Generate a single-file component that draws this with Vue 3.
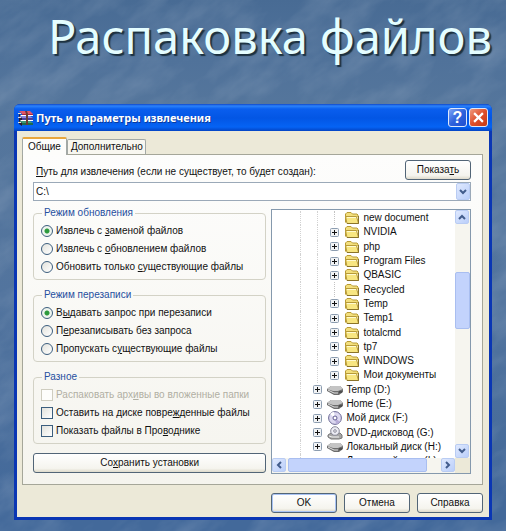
<script setup>
import { ref } from 'vue'

const path = ref('C:\\')
const update = ref(0)
const overwrite = ref(0)

// Each label is split as [before, underlined access key, after]
const updateModes = [
  ['Извлечь с ', 'з', 'аменой файлов'],
  ['Извлечь с ', 'о', 'бновлением файлов'],
  ['Обновить только ', 'с', 'уществующие файлы'],
]
const overwriteModes = [
  ['В', 'ы', 'давать запрос при перезаписи'],
  ['П', 'е', 'резаписывать без запроса'],
  ['Пропускать с', 'у', 'ществующие файлы'],
]
const misc = [
  { text: ['Распаковать арх', 'и', 'вы во вложенные папки'], disabled: true },
  { text: ['Оставить на диске повре', 'ж', 'денные файлы'], disabled: false },
  { text: ['Показать файлы в Про', 'в', 'однике'], disabled: false },
]
const nodes = [
  { name: 'new document', icon: 'folder', leaf: true },
  { name: 'NVIDIA', icon: 'folder' },
  { name: 'php', icon: 'folder' },
  { name: 'Program Files', icon: 'folder' },
  { name: 'QBASIC', icon: 'folder' },
  { name: 'Recycled', icon: 'folder', leaf: true },
  { name: 'Temp', icon: 'folder' },
  { name: 'Temp1', icon: 'folder' },
  { name: 'totalcmd', icon: 'folder' },
  { name: 'tp7', icon: 'folder' },
  { name: 'WINDOWS', icon: 'folder' },
  { name: 'Мои документы', icon: 'folder' },
  { name: 'Temp (D:)', icon: 'drive' },
  { name: 'Home (E:)', icon: 'drive' },
  { name: 'Мой диск (F:)', icon: 'disc' },
  { name: 'DVD-дисковод (G:)', icon: 'dvd' },
  { name: 'Локальный диск (H:)', icon: 'drive' },
]
</script>

<template>
  <div class="slide">
    <svg class="texture" aria-hidden="true">
      <filter id="stone" x="0" y="0" width="100%" height="100%">
        <feTurbulence type="fractalNoise" baseFrequency="0.02 0.045" numOctaves="4" seed="8" />
        <feColorMatrix values="0 0 0 0 0.66  0 0 0 0 0.72  0 0 0 0 0.8  1.4 0 0 0 -0.5" />
      </filter>
      <g transform="rotate(-35)">
        <rect x="-600" y="-300" width="1600" height="1400" filter="url(#stone)" />
      </g>
    </svg>
    <h1>Распаковка файлов</h1>

    <main class="window">
      <header class="titlebar">
        <svg class="app-icon" viewBox="0 0 16 16" aria-hidden="true">
          <path d="M1 4l3 2v10l-3-2z" fill="#2a1830" />
          <path d="M1 1h11l3 3H4z" fill="#e0566a" /><path d="M4 4h11v1H4z" fill="#a8283e" />
          <path d="M2 5h13v1H3z" fill="#fff" />
          <path d="M1 6h11l3 2H4z" fill="#8a86e0" /><path d="M4 8h11v2H4z" fill="#4b3f9c" />
          <path d="M2 10h13v1H3z" fill="#fff" />
          <path d="M1 11h11l3 2H4z" fill="#3f9a78" /><path d="M4 13h11v2H4z" fill="#1d6a4c" />
          <path d="M0 3h3v1H0zM0 7h3v1H0zM0 12h3v1H0z" fill="#e6dfd2" />
          <path d="M7 1h2l1 3v11H8V4z" fill="#6a3b34" />
        </svg>
        <h2>Путь и параметры извлечения</h2>
        <button class="caption help" aria-label="Справка">?</button>
        <button class="caption close" aria-label="Закрыть">
          <svg viewBox="0 0 10 10"><path d="M1 1l8 8M9 1l-8 8" stroke="#fff" stroke-width="2" /></svg>
        </button>
      </header>

      <div class="body">
        <nav class="tabs">
          <button class="tab active">Общие</button>
          <button class="tab">Дополнительно</button>
        </nav>

        <section class="panel">
          <div class="path-head">
            <label for="path"><u>П</u>уть для извлечения (если не существует, то будет создан):</label>
            <button class="btn browse">Показа<u>т</u>ь</button>
          </div>
          <div class="combo">
            <input id="path" v-model="path" type="text" />
            <button class="arrow" aria-label="Список путей">
              <svg viewBox="0 0 8 6"><path d="M1 1l3 3 3-3" /></svg>
            </button>
          </div>

          <div class="columns">
            <div class="options">
              <fieldset>
                <legend>Режим обновления</legend>
                <label v-for="(m, i) in updateModes" :key="i">
                  <input v-model="update" type="radio" name="update" :value="i" />
                  <span>{{ m[0] }}<u>{{ m[1] }}</u>{{ m[2] }}</span>
                </label>
              </fieldset>
              <fieldset>
                <legend>Режим перезаписи</legend>
                <label v-for="(m, i) in overwriteModes" :key="i">
                  <input v-model="overwrite" type="radio" name="overwrite" :value="i" />
                  <span>{{ m[0] }}<u>{{ m[1] }}</u>{{ m[2] }}</span>
                </label>
              </fieldset>
              <fieldset>
                <legend>Разное</legend>
                <label v-for="(m, i) in misc" :key="i" :class="{ disabled: m.disabled }">
                  <input type="checkbox" :disabled="m.disabled" />
                  <span>{{ m.text[0] }}<u>{{ m.text[1] }}</u>{{ m.text[2] }}</span>
                </label>
              </fieldset>
              <button class="btn save">Со<u>х</u>ранить установки</button>
            </div>

            <div class="tree">
              <ul>
                <li v-for="n in nodes" :key="n.name" :class="{ leaf: n.leaf }">
                  <span class="guide"></span>
                  <span v-if="n.icon === 'folder'" class="guide"></span>
                  <span class="branch">
                    <svg v-if="!n.leaf" viewBox="0 0 9 9" aria-hidden="true">
                      <rect x="0.5" y="0.5" width="8" height="8" rx="1" fill="#f1f3f5" stroke="#8c9db0" />
                      <path d="M2 4.5h5M4.5 2v5" stroke="#111" />
                    </svg>
                  </span>
                  <svg v-if="n.icon === 'folder'" class="icon" viewBox="0 0 16 14" aria-hidden="true">
                    <path d="M1.5 11.5V3L3 1.5h4L8.5 3H13l1 1v2" fill="#f3df7c" stroke="#b99b35" />
                    <path d="M1.5 5.5h11l2 7H3z" fill="#f8e681" stroke="#b79a39" />
                    <path d="M3 12.5h11.5V5" fill="none" stroke="#8b742a" />
                    <path d="M3 6.5h9" stroke="#fffbd0" />
                  </svg>
                  <svg v-else-if="n.icon === 'drive'" class="icon" viewBox="0 0 16 14" aria-hidden="true">
                    <path d="M0 6l4-3h9l3 3v3l-4 3H7L0 8z" fill="#6c6c6c" />
                    <path d="M0 6l4-3h9l3 3-5 2H6z" fill="#c4c4c4" />
                    <path d="M1 7l6 3h4" fill="none" stroke="#e4e4e4" /><path d="M12 9h3" stroke="#333" />
                  </svg>
                  <svg v-else-if="n.icon === 'disc'" class="icon" viewBox="0 0 16 14" aria-hidden="true">
                    <circle cx="8" cy="7" r="6.4" fill="#dcd8f0" stroke="#6b6894" />
                    <path d="M8 7L3 3a6 6 0 0 1 4-2z" fill="#fff" /><path d="M8 7l5 4a6 6 0 0 1-4 2z" fill="#b8add8" />
                    <circle cx="8" cy="7" r="2" fill="#fff" stroke="#5f5a90" />
                  </svg>
                  <svg v-else class="icon" viewBox="0 0 16 14" aria-hidden="true">
                    <path d="M1 9l3-2h9l2 2v3l-3 1H4l-3-2z" fill="#a6a6a6" stroke="#777" />
                    <circle cx="8" cy="5" r="4.3" fill="#ececf3" stroke="#8a8a9a" />
                    <circle cx="8" cy="5" r="1.3" fill="#fff" stroke="#8a8a9a" />
                    <path d="M2 10l3 1h7" fill="none" stroke="#f2f2f2" />
                  </svg>
                  <span>{{ n.name }}</span>
                </li>
                <li class="cut"><span class="guide"></span><span class="branch"></span><span class="icon"></span><span>Локальный диск (I:)</span></li>
              </ul>
              <div class="vbar">
                <button class="arrow" aria-label="Вверх"><svg viewBox="0 0 8 6"><path d="M1 5l3-3 3 3" /></svg></button>
                <div class="vtrack"><span class="vthumb"></span></div>
                <button class="arrow" aria-label="Вниз"><svg viewBox="0 0 8 6"><path d="M1 1l3 3 3-3" /></svg></button>
              </div>
              <div class="hbar">
                <button class="arrow" aria-label="Влево"><svg viewBox="0 0 6 8"><path d="M5 1L2 4l3 3" /></svg></button>
                <div class="htrack"><span class="hthumb"></span></div>
                <button class="arrow" aria-label="Вправо"><svg viewBox="0 0 6 8"><path d="M1 1l3 3-3 3" /></svg></button>
              </div>
              <span class="corner"></span>
            </div>
          </div>
        </section>

        <footer>
          <button class="btn default">OK</button>
          <button class="btn">Отмена</button>
          <button class="btn">Справка</button>
        </footer>
      </div>
    </main>
  </div>
</template>

<style>
body { margin: 0; background: #456b9b; }
</style>

<style scoped>
* { box-sizing: border-box; }
.slide {
  position: relative;
  min-height: 100vh;
  padding: 0 14px 10px;
  overflow: hidden;
  background: linear-gradient(#486b94 0, #50729a 60px, #55769c 110px, #52749e 300px, #43699a 500px);
  font: 10px/14px "Liberation Sans", Arial, sans-serif;
  color: #111;
}
.texture { position: absolute; inset: 0; width: 100%; height: 100%; opacity: 0.22; }
h1 {
  position: relative;
  margin: 0;
  height: 104px;
  padding-top: 4px;
  font: 47px/64px "Noto Sans", "Open Sans", sans-serif;
  text-align: right;
  white-space: nowrap;
  color: #e4fdff;
  text-shadow: 2px 2px 1px #1c3140;
}
button, input { font: inherit; color: inherit; margin: 0; }
button { padding: 0; }
svg { display: block; }
.window {
  position: relative;
  border-radius: 6px 6px 0 0;
  background: #0a36b4;
  padding: 0 3px 3px;
}
.titlebar {
  display: flex;
  align-items: center;
  gap: 2px;
  height: 27px;
  margin: 0 -3px;
  padding: 0 4px;
  border-radius: 6px 6px 0 0;
  background: linear-gradient(#1048c8 0, #2c83fa 2px, #0a5eee 5px, #0356e4 14px, #0563f4 23px, #0344c4 27px);
}
.app-icon { width: 16px; height: 16px; }
h2 {
  flex: 1;
  margin: 0;
  font: bold 11px/14px "Noto Sans", "Open Sans", sans-serif;
  color: #fff;
  text-shadow: 1px 1px 0 #0b3a9c;
}
.caption {
  display: grid;
  place-items: center;
  width: 19px;
  height: 19px;
  border: 1px solid #dfe9fb;
  border-radius: 3px;
  color: #fff;
}
.help { background: linear-gradient(135deg, #7ea5f6, #2f62dc 50%, #1e4fd0); font: bold 16px/16px "Liberation Sans", sans-serif; }
.close { background: linear-gradient(135deg, #f09a7e, #de4f2b 50%, #c53a14); }
.close svg { width: 11px; height: 11px; }
.body { padding: 6px 6px 4px 5px; background: #ece9d8; }
.tabs { display: flex; align-items: flex-end; }
.tab {
  height: 15px;
  padding: 0 2px 0 3px;
  border: 1px solid #a3a9a6;
  border-bottom: 0;
  border-radius: 2px 2px 0 0;
  background: #f8f7f0;
}
.tab.active {
  height: 18px;
  margin-bottom: -1px;
  padding: 0 5px;
  position: relative;
  border-top: 2px solid #e8a63c;
  background: #fdfdfb;
}
.panel {
  padding: 5px 11px 10px 10px;
  border: 1px solid #a5a699;
  background: linear-gradient(#fdfdfc, #f5f4ee);
}
.path-head { display: flex; justify-content: space-between; }
.path-head label { padding-top: 5px; padding-left: 3px; white-space: nowrap; }
.btn {
  height: 20px;
  border: 1px solid #526577;
  border-radius: 3px;
  background: linear-gradient(#fff, #f5f4ee 80%, #dedacb);
}
.browse { width: 66px; }
.combo {
  display: flex;
  height: 19px;
  margin-top: 2px;
  border: 1px solid #9ba9b8;
  background: #fff;
}
.combo input { flex: 1; min-width: 0; padding: 0 2px; border: 0; background: none; outline: 0; }
.arrow {
  display: grid;
  place-items: center;
  flex: none;
  width: 14px;
  height: 14px;
  border: 1px solid #b9ccf3;
  border-radius: 2px;
  background: linear-gradient(135deg, #dfe9fe, #bacefa);
}
.combo .arrow { height: 17px; }
.arrow svg { width: 8px; height: 8px; }
.arrow path { fill: none; stroke: #425c8c; stroke-width: 2; }
.columns { display: flex; gap: 5px; margin-top: 5px; }
.options { flex: 235; display: flex; flex-direction: column; min-width: 0; padding-bottom: 1px; }
fieldset {
  display: flex;
  flex-direction: column;
  gap: 4px;
  min-width: 0;
  height: 74px;
  margin: 0 0 8px;
  padding: 4px 7px 0;
  border: 1px solid #d3d2c6;
  border-radius: 4px;
}
legend { margin-left: 1px; padding: 0 2px; color: #264f9f; }
fieldset label { display: flex; align-items: center; gap: 3px; white-space: nowrap; }
fieldset input {
  appearance: none;
  flex: none;
  width: 12px;
  height: 12px;
  border: 1px solid #3c5e7e;
  background: linear-gradient(135deg, #e2e2dc, #fff);
}
input[type="radio"] { border-radius: 50%; }
input[type="radio"]:checked { background: radial-gradient(#2d9a3d 0 2px, #eef4ee 3px); }
.disabled { color: #b1afa3; }
.disabled input { border-color: #cfcdc0; background: #fdfdfb; }
.save { width: 100%; margin-top: 1px; }
.tree {
  flex: 199;
  display: grid;
  grid-template: 1fr 15px / 1fr 15px;
  min-width: 0;
  margin-top: 3px;
  border: 1px solid #8599ad;
  background: #fff;
}
ul {
  display: flex;
  flex-direction: column;
  min-width: 0;
  min-height: 0;
  margin: 0;
  padding: 1px 0 0 28px;
  overflow: hidden;
  list-style: none;
}
li { display: flex; flex: 1; min-height: 0; align-items: center; white-space: nowrap; }
.guide { align-self: stretch; flex: none; width: 17px; border-left: 1px dotted #d2d2d2; }
.branch { flex: none; display: grid; align-items: center; align-self: stretch; width: 14px; margin-left: -4px; }
.leaf .branch { margin-left: 0; width: 10px; border-left: 1px dotted #c3c3c3; }
.branch svg { width: 9px; height: 9px; }
.icon { flex: none; width: 16px; height: 14px; margin-right: 3px; }
.cut { flex: none; height: 4px; align-items: flex-start; overflow: hidden; }
.vbar, .hbar { display: flex; background: #f6f5ef; }
.vbar { flex-direction: column; }
.vtrack { flex: 1; padding-top: 48px; }
.vthumb, .hthumb { display: block; border: 1px solid #a9bef0; border-radius: 2px; background: #c3d3fc; }
.vthumb { height: 57px; }
.htrack { flex: 1; padding: 0 14px 0 2px; }
.hthumb { height: 14px; }
.corner { background: #ece9d8; }
footer { display: flex; justify-content: flex-end; gap: 7px; padding-top: 8px; }
footer .btn { width: 66px; }
.default { box-shadow: inset 0 0 0 1px #a9c3f3; }
</style>
